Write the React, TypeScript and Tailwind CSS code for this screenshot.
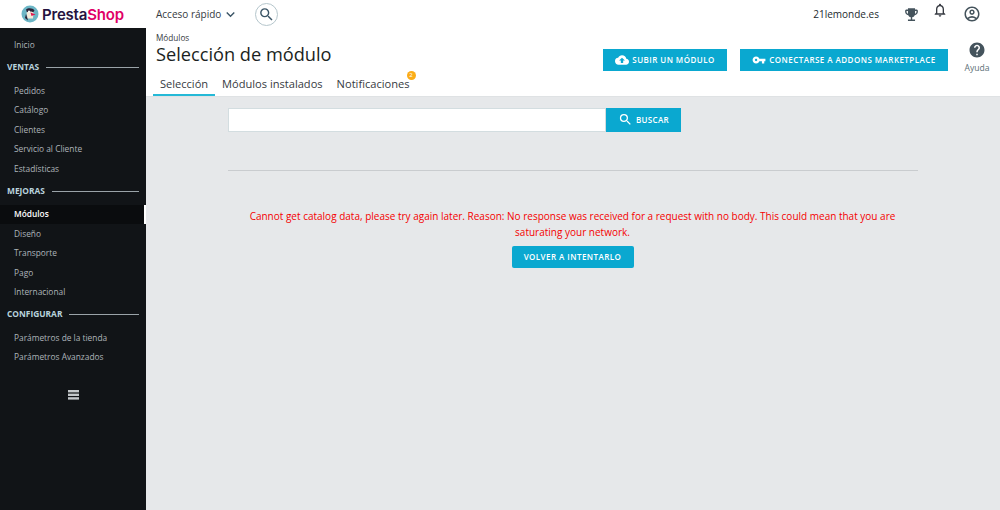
import React from "react";
import { MdKeyboardArrowDown, MdSearch, MdNotificationsNone, MdEmojiEvents, MdCloudUpload, MdVpnKey, MdHelp, MdOutlineAccountCircle } from "react-icons/md";

const font = { fontFamily: '"Open Sans", sans-serif' };

function Item({ label, active }: { label: string; active?: boolean }) {
  return (
    <div className={active ? "h-[19.5px] pt-[1px] flex items-center pl-[14px] text-[8.35px] font-semibold text-white bg-[#0a0c0e] border-r-[2px] border-white" : "h-[19.5px] pt-[1px] flex items-center pl-[14px] text-[8.35px] text-[#aeb5ba]"}>
      {label}
    </div>
  );
}

function Section({ label }: { label: string }) {
  return (
    <div className="h-[23px] flex items-center pl-[7px] pr-[7px] gap-[7px] mt-[1px] mb-[2px]">
      <span className="text-[8.4px] font-bold text-[#b8d2dc]">{label}</span>
      <span className="flex-1 h-px bg-[#9aa3a8]" />
    </div>
  );
}

export default function App() {
  return (
    <div style={font} className="w-[1000px] h-[510px] flex flex-col overflow-hidden bg-[#e6e8ea]">
      <header className="h-[28px] shrink-0 bg-white flex items-center relative">
        <div className="w-[146px] shrink-0 flex items-center pl-[21px] gap-[3px]">
          <svg width="18" height="18" viewBox="0 0 18 18">
            <circle cx="9" cy="9" r="8.5" fill="#6cb6c6" />
            <path d="M5 4.5C7 2.5 12 2.8 13.5 5.5L12 7.5H6Z" fill="#2b2237" />
            <path d="M5.5 7.5C7 6 11 6 12.5 7.5L12 13.5H6.5Z" fill="#f3ead9" />
            <path d="M9.5 7.5L14.5 9.5L10.5 11Z" fill="#e0164f" />
            <path d="M5 9L7 15.5L4 13Z" fill="#2b2237" />
            <circle cx="8" cy="6.4" r="1" fill="#fff" />
          </svg>
          <span style={{ fontFamily: 'Inter, sans-serif' }} className="text-[15px] font-semibold tracking-[-0.2px] text-[#25133f] leading-none">
            Presta<span className="text-[#df0067]">Shop</span>
          </span>
        </div>
        <div className="ml-[10px] flex items-center gap-[1px] text-[10px] text-[#363a41]">
          Acceso rápido
          <MdKeyboardArrowDown size={17} className="text-[#3b5566]" />
        </div>
        <div className="ml-[16px] w-[23px] h-[23px] rounded-full border border-[#b5c6cc] flex items-center justify-center">
          <MdSearch size={17} className="text-[#3b5566]" />
        </div>
        <span className="ml-auto text-[10px] text-[#232a2e]">21lemonde.es</span>
        <MdEmojiEvents size={17} className="ml-[24px] text-[#44535c]" />
        <MdNotificationsNone size={16} className="ml-[12px] mb-[9px] text-[#363a41]" />
        <MdOutlineAccountCircle size={18} className="ml-[15px] mr-[19px] text-[#44535c]" />
      </header>
      <div className="flex-1 flex min-h-0">
        <aside className="w-[146px] shrink-0 bg-[#111417] pt-[7.5px] flex flex-col">
          <Item label="Inicio" />
          <Section label="VENTAS" />
          <Item label="Pedidos" />
          <Item label="Catálogo" />
          <Item label="Clientes" />
          <Item label="Servicio al Cliente" />
          <Item label="Estadísticas" />
          <Section label="MEJORAS" />
          <Item label="Módulos" active />
          <Item label="Diseño" />
          <Item label="Transporte" />
          <Item label="Pago" />
          <Item label="Internacional" />
          <Section label="CONFIGURAR" />
          <Item label="Parámetros de la tienda" />
          <Item label="Parámetros Avanzados" />
          <div className="mt-[23px] flex justify-center">
            <svg width="11" height="10" viewBox="0 0 11 10" fill="#c4c8cb">
              <rect x="0" y="0" width="11" height="2.4" />
              <rect x="0" y="3.6" width="11" height="2.4" />
              <rect x="0" y="7.2" width="11" height="2.4" />
            </svg>
          </div>
        </aside>
        <main className="flex-1 min-w-0 flex flex-col">
          <div className="h-[69px] shrink-0 bg-white flex flex-col border-b border-[#dfe2e4]">
            <div className="flex flex-1 min-h-0">
              <div className="pl-[10px] flex-1">
                <div className="text-[8.2px] leading-[10px] mt-[5px] text-[#363a41]">Módulos</div>
                <h1 className="text-[18.2px] leading-[23px] text-[#1b1f22]">Selección de módulo</h1>
              </div>
              <button className="mt-[21px] h-[22px] w-[124px] bg-[#0aa8d0] text-white flex items-center justify-center gap-[3px] text-[8px] font-semibold tracking-[0.45px]">
                <MdCloudUpload size={14} />
                SUBIR UN MÓDULO
              </button>
              <button className="mt-[21px] ml-[13px] h-[22px] w-[208px] bg-[#0aa8d0] text-white flex items-center justify-center gap-[3px] text-[8px] font-semibold tracking-[0.45px]">
                <MdVpnKey size={14} />
                CONECTARSE A ADDONS MARKETPLACE
              </button>
              <div className="w-[52px] pl-[6px] flex flex-col items-center pt-[13px]">
                <MdHelp size={18} className="text-[#44535c]" />
                <span className="text-[8.6px] leading-[12px] mt-[3px] text-[#5c6f76]">Ayuda</span>
              </div>
            </div>
            <nav className="flex h-[21px] pl-[7px] pt-[0.5px] text-[11.1px] text-[#363a41]">
              <div className="w-[62px] flex items-start justify-center border-b-[2px] border-[#25b9d7] leading-[16px] h-[20.5px]">Selección</div>
              <div className="ml-[7px] leading-[16px]">Módulos instalados</div>
              <div className="ml-[14px] leading-[16px] relative">
                Notificaciones
                <span className="absolute -right-[6px] -top-[5px] w-[9px] h-[9px] rounded-full bg-[#fbad18] text-white text-[6px] leading-[9px] text-center">2</span>
              </div>
            </nav>
          </div>
          <div className="flex-1 min-h-0">
            <div className="mt-[10.5px] ml-[82px] flex w-[453px] h-[24.5px]">
              <div className="flex-1 bg-white border border-[#d3dde0]" />
              <button className="w-[75px] bg-[#0aa8d0] text-white flex items-center justify-center gap-[3px] text-[8px] font-semibold tracking-[0.3px]">
                <MdSearch size={15} />
                BUSCAR
              </button>
            </div>
            <div className="ml-[82px] w-[690px] mt-[38px] h-px bg-[#c9cccf]" />
            <div className="ml-[81px] w-[691px] mt-[38px] flex flex-col items-center">
              <p className="text-[10px] leading-[15.5px] text-[#f50000] text-center">
                Cannot get catalog data, please try again later. Reason: No response was received for a request with no body. This could mean that you are saturating your network.
              </p>
              <button className="mt-[6px] w-[122px] h-[22px] rounded-[2px] bg-[#0aa8d0] text-white text-[8px] font-semibold tracking-[0.45px]">
                VOLVER A INTENTARLO
              </button>
            </div>
          </div>
        </main>
      </div>
    </div>
  );
}
